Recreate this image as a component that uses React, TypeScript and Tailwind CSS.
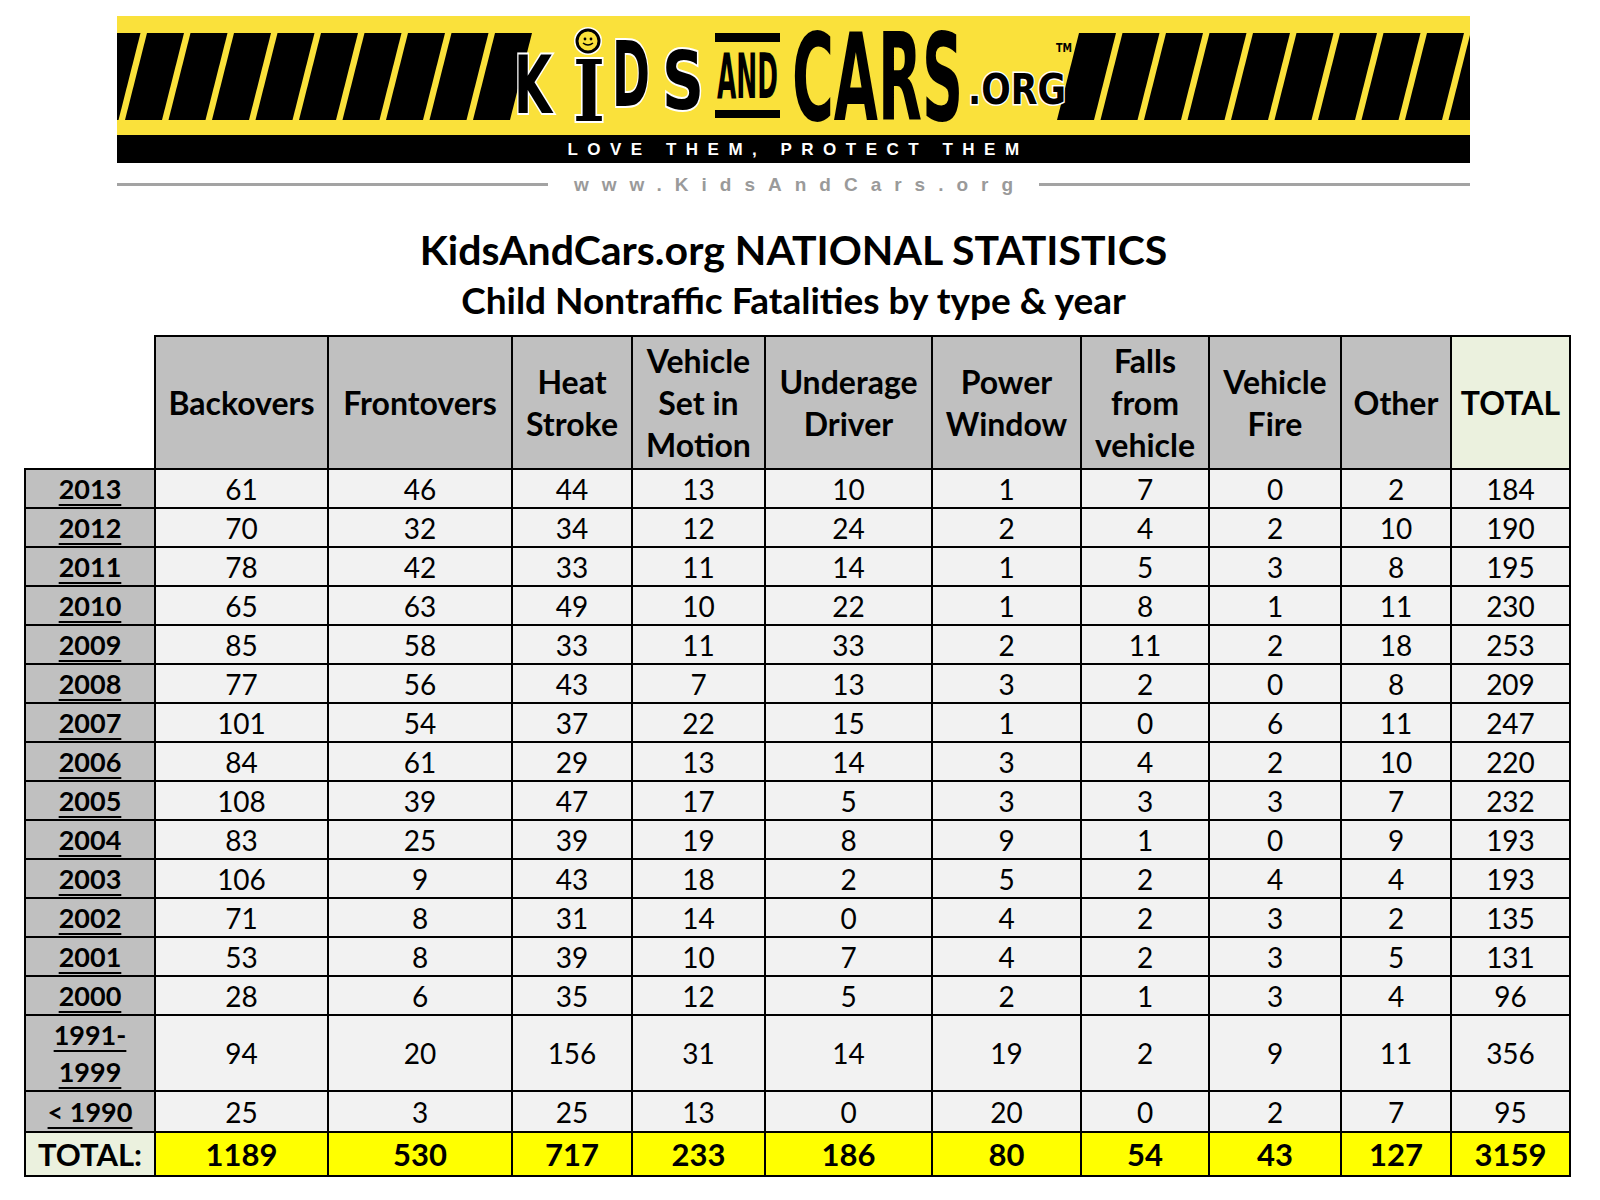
import React from "react";

// column widths measured off the sheet (year column first)
const colWidths = [130, 173, 184, 120, 133, 167, 149, 128, 132, 110, 119];

const headers: string[][] = [
  ["Backovers"],
  ["Frontovers"],
  ["Heat", "Stroke"],
  ["Vehicle", "Set in", "Motion"],
  ["Underage", "Driver"],
  ["Power", "Window"],
  ["Falls", "from", "vehicle"],
  ["Vehicle", "Fire"],
  ["Other"],
];

const rows: { year: string[]; values: number[]; tall?: boolean }[] = [
  { year: ["2013"], values: [61, 46, 44, 13, 10, 1, 7, 0, 2, 184] },
  { year: ["2012"], values: [70, 32, 34, 12, 24, 2, 4, 2, 10, 190] },
  { year: ["2011"], values: [78, 42, 33, 11, 14, 1, 5, 3, 8, 195] },
  { year: ["2010"], values: [65, 63, 49, 10, 22, 1, 8, 1, 11, 230] },
  { year: ["2009"], values: [85, 58, 33, 11, 33, 2, 11, 2, 18, 253] },
  { year: ["2008"], values: [77, 56, 43, 7, 13, 3, 2, 0, 8, 209] },
  { year: ["2007"], values: [101, 54, 37, 22, 15, 1, 0, 6, 11, 247] },
  { year: ["2006"], values: [84, 61, 29, 13, 14, 3, 4, 2, 10, 220] },
  { year: ["2005"], values: [108, 39, 47, 17, 5, 3, 3, 3, 7, 232] },
  { year: ["2004"], values: [83, 25, 39, 19, 8, 9, 1, 0, 9, 193] },
  { year: ["2003"], values: [106, 9, 43, 18, 2, 5, 2, 4, 4, 193] },
  { year: ["2002"], values: [71, 8, 31, 14, 0, 4, 2, 3, 2, 135] },
  { year: ["2001"], values: [53, 8, 39, 10, 7, 4, 2, 3, 5, 131] },
  { year: ["2000"], values: [28, 6, 35, 12, 5, 2, 1, 3, 4, 96] },
  { year: ["1991-", "1999"], values: [94, 20, 156, 31, 14, 19, 2, 9, 11, 356], tall: true },
  { year: ["< 1990"], values: [25, 3, 25, 13, 0, 20, 0, 2, 7, 95] },
];

const totals = [1189, 530, 717, 233, 186, 80, 54, 43, 127, 3159];

function Stripes({ start, count }: { start: number; count: number }) {
  return (
    <>
      {Array.from({ length: count }).map((_, i) => {
        const bl = start + 43.5 * i;
        return (
          <polygon
            key={i}
            points={`${bl},104 ${bl + 37},104 ${bl + 59},17 ${bl + 22},17`}
            fill="#000"
          />
        );
      })}
    </>
  );
}

function Banner() {
  const hand = { fontFamily: "'DejaVu Sans', sans-serif" };
  return (
    <div className="ml-[117px] w-[1353px] pt-4">
      <svg width="1353" height="119" viewBox="0 0 1353 119" className="block">
        <rect width="1353" height="119" fill="#fae13b" />
        <Stripes start={-35.5} count={10} />
        <Stripes start={940} count={10} />

        {/* KiDS, hand drawn look */}
        <g stroke="#fff" strokeWidth="4" paintOrder="stroke" fill="#000" fontWeight="700" style={hand}>
          <text x="397" y="97" fontSize="80" textLength="38" lengthAdjust="spacingAndGlyphs">K</text>
          <text x="456" y="105" fontSize="84" textLength="32" lengthAdjust="spacingAndGlyphs" style={{ fontFamily: "'DejaVu Serif', serif" }}>I</text>
          <text x="495" y="90" fontSize="90" textLength="38" lengthAdjust="spacingAndGlyphs">D</text>
          <text x="545" y="93" fontSize="80" textLength="42" lengthAdjust="spacingAndGlyphs">S</text>
        </g>
        <circle cx="471" cy="25" r="11" fill="#fae13b" stroke="#fff" strokeWidth="6" />
        <circle cx="471" cy="25" r="11" fill="#fae13b" stroke="#000" strokeWidth="3" />
        <circle cx="468" cy="23" r="1.4" fill="#000" />
        <circle cx="474" cy="23" r="1.4" fill="#000" />
        <path d="M466 27 Q471 31 476 27" stroke="#000" strokeWidth="1.6" fill="none" />

        {/* AND between bars */}
        <rect x="598" y="17" width="65" height="9" fill="#000" />
        <text x="600" y="82" fontSize="63" fontWeight="700" textLength="61" lengthAdjust="spacingAndGlyphs" fill="#000" style={hand}>AND</text>
        <rect x="598" y="94" width="65" height="8" fill="#000" />

        {/* CARS */}
        <text x="675" y="104" fontSize="121" fontWeight="700" textLength="171" lengthAdjust="spacingAndGlyphs" fill="#000" style={hand}>CARS</text>

        {/* .ORG */}
        <text x="851" y="88" fontSize="42" fontWeight="700" stroke="#fff" strokeWidth="3" paintOrder="stroke" textLength="98" lengthAdjust="spacingAndGlyphs" fill="#000" style={hand}>.ORG</text>
        <text x="939" y="36" fontSize="13" fontWeight="700" textLength="16" lengthAdjust="spacingAndGlyphs" fill="#000" style={hand}>TM</text>
      </svg>
      <div className="h-[28px] bg-black flex items-center justify-center pl-[9px]">
        <span className="text-white text-[17px] font-black leading-none tracking-[9.5px] font-['Liberation_Sans',sans-serif]">
          LOVE THEM, PROTECT THEM
        </span>
      </div>
      <div className="flex items-center h-[42px]">
        <div className="flex-1 h-[3px] bg-[#a3a3a3]" />
        <span className="pl-[26px] pr-[13px] text-[19px] font-bold text-[#9a9a9a] tracking-[13px] leading-none font-['Liberation_Sans',sans-serif]">
          www.KidsAndCars.org
        </span>
        <div className="flex-1 h-[3px] bg-[#a3a3a3]" />
      </div>
    </div>
  );
}

export default function App() {
  return (
    <div className="bg-white w-[1600px] min-h-[1200px] text-black font-['Lato','Noto_Sans',sans-serif]">
      <Banner />

      <div className="ml-[117px] w-[1353px] flex flex-col items-center mt-[20px]">
        <h1 className="text-[41px] font-bold leading-[50px]">KidsAndCars.org NATIONAL STATISTICS</h1>
        <h2 className="text-[37px] font-bold leading-[50px]">Child Nontraffic Fatalities by type &amp; year</h2>
      </div>

      <table className="ml-[24px] mt-[10px] border-collapse table-fixed">
        <colgroup>
          {colWidths.map((w, i) => (
            <col key={i} style={{ width: w }} />
          ))}
        </colgroup>
        <thead>
          <tr className="h-[133px]">
            <th className="bg-white" />
            {headers.map((h, i) => (
              <th
                key={i}
                className="border-2 border-black bg-[#c0c0c0] text-[32px] font-bold leading-[42px] align-middle text-center"
              >
                {h.map((line) => (
                  <div key={line}>{line}</div>
                ))}
              </th>
            ))}
            <th className="border-2 border-black bg-[#ebf1de] text-[32px] font-bold leading-[42px] align-middle text-center">
              TOTAL
            </th>
          </tr>
        </thead>
        <tbody>
          {rows.map((r) => (
            <tr key={r.year.join("")} className={r.tall ? "h-[76px]" : r.year[0] === "< 1990" ? "h-[41px]" : "h-[39px]"}>
              <td className="border-2 border-black bg-[#c0c0c0] text-center text-[27px] font-bold leading-[37px]">
                {r.year.map((y) => (
                  <div key={y}>
                    <span className="underline decoration-2 underline-offset-[5px]">{y}</span>
                  </div>
                ))}
              </td>
              {r.values.map((v, i) => (
                <td key={i} className="border-2 border-black bg-[#f2f2f2] text-center text-[28px] leading-none">
                  {v}
                </td>
              ))}
            </tr>
          ))}
          <tr className="h-[44px]">
            <td className="border-2 border-black bg-[#ebf1de] text-center text-[31px] font-bold leading-none">
              TOTAL:
            </td>
            {totals.map((v, i) => (
              <td key={i} className="border-2 border-black bg-[#ffff00] text-center text-[31px] font-bold leading-none">
                {v}
              </td>
            ))}
          </tr>
        </tbody>
      </table>
    </div>
  );
}
